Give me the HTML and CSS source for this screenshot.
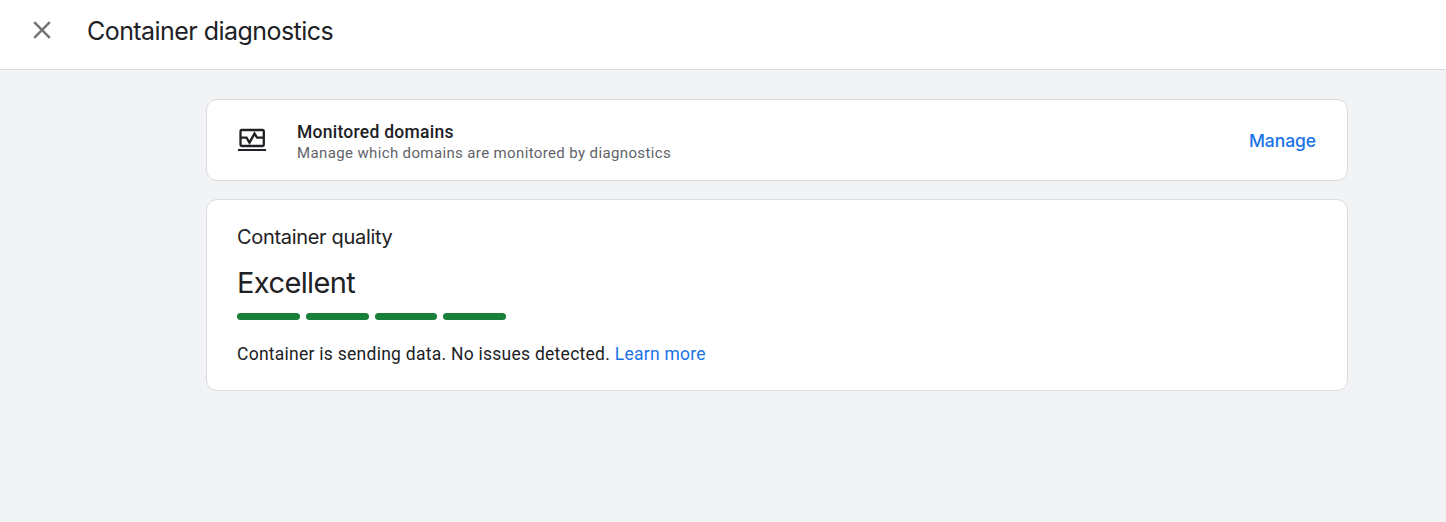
FILE: index.html
```html
<!DOCTYPE html>
<html lang="en">
<head>
<meta charset="utf-8">
<title>Container diagnostics</title>
<link rel="stylesheet" href="styles.css">
</head>
<body>
<header class="topbar">
  <button class="close" aria-label="Close">
    <svg width="18" height="18" viewBox="0 0 18 18"><path d="M1.2 1.2 16.8 16.8M16.8 1.2 1.2 16.8" fill="none" stroke="#757575" stroke-width="2.5"/></svg>
  </button>
  <h1 class="title">Container diagnostics</h1>
</header>
<main class="content">
  <section class="card domains">
    <svg class="monitor" width="28" height="24" viewBox="0 0 28 24" fill="none" stroke="#202124" stroke-width="2.3">
      <rect x="2.5" y="2" width="23.3" height="16" rx="1.2"/>
      <path d="M2.5 9.6h6l3 5 5-9 2.6 4h6.7"/>
      <path d="M0 22h28" stroke-width="2"/>
    </svg>
    <div class="domains-text">
      <h2 class="domains-title">Monitored domains</h2>
      <p class="domains-sub">Manage which domains are monitored by diagnostics</p>
    </div>
    <a class="manage">Manage</a>
  </section>
  <section class="card quality">
    <h2 class="quality-label">Container quality</h2>
    <div class="quality-value">Excellent</div>
    <div class="meter"><span></span><span></span><span></span><span></span></div>
    <p class="status"><span class="status-text">Container is sending data. No issues detected.</span> <a class="learn">Learn more</a></p>
  </section>
</main>
</body>
</html>
```
FILE: styles.css
```css
* { box-sizing: border-box; }
body { margin: 0; min-height: 522px; background: #f1f3f4; color: #202124; font-family: Roboto, "Liberation Sans", sans-serif; }
h1, h2, p { margin: 0; font-weight: 400; white-space: nowrap; }
.topbar { display: flex; align-items: flex-start; height: 70px; padding: 21px 33px 0; background: #fff; border-bottom: 1px solid #dadce0; }
.close { display: block; padding: 0; border: 0; background: none; width: 18px; height: 18px; }
.close svg { display: block; }
.title { margin: -5px 0 0 36px; font: 400 25px/30px Inter, sans-serif; letter-spacing: -0.55px; }
.content { display: flex; flex-direction: column; gap: 18px; width: 1142px; margin: 29px 0 0 206px; }
.card { background: #fff; border: 1px solid #dadce0; border-radius: 11px; }
.domains { display: flex; align-items: flex-start; height: 82px; padding: 0 31px; }
.monitor { flex: none; margin-top: 28px; }
.domains-text { margin: 21px 0 0 31px; }
.domains-title { font-size: 17.5px; line-height: 22px; font-weight: 500; letter-spacing: 0.26px; }
.domains-sub { font-size: 15px; line-height: 20px; letter-spacing: 0.37px; color: #5f6368; }
.manage { margin: 30px 0 0 auto; font: 500 17.5px/22px Inter, sans-serif; letter-spacing: -0.08px; color: #1a73e8; }
.quality { height: 192px; padding: 24px 30px 0; }
.quality-label { font: 400 20px/26px Inter, sans-serif; letter-spacing: -0.32px; }
.quality-value { margin-top: 15px; font: 400 29px/36px Inter, sans-serif; letter-spacing: -0.6px; }
.meter { display: flex; gap: 6px; width: 269px; margin-top: 12px; }
.meter span { flex: 1; height: 7px; border-radius: 4px; background: #188038; }
.status { margin-top: 22px; font-size: 17.5px; line-height: 24px; letter-spacing: 0.26px; }
.learn { color: #1a73e8; }
```
